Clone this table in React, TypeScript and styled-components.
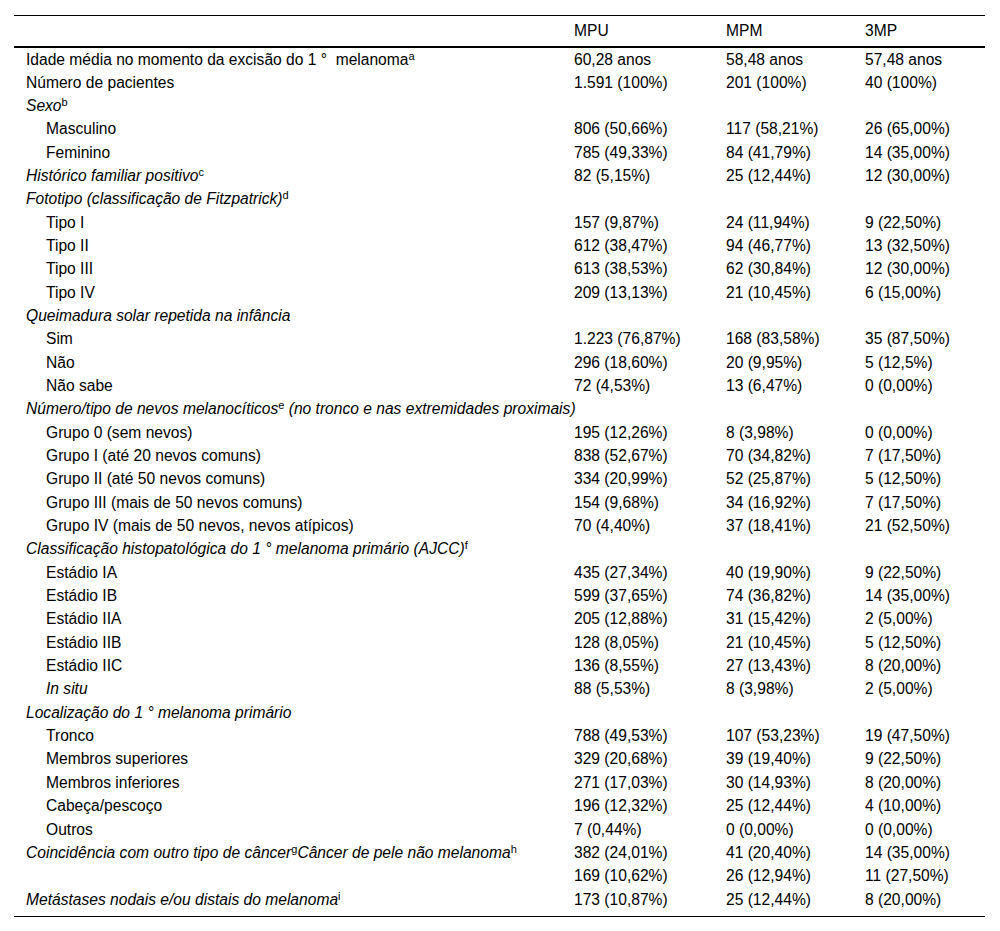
import React from "react";
import styled, { createGlobalStyle } from "styled-components";

const Global = createGlobalStyle`
  html, body { margin: 0; padding: 0; background: #fff; }
  body { font-family: "Liberation Sans", Arial, Helvetica, sans-serif; color: #000; }
`;

const Page = styled.div`
  padding: 15px 15px 16px 14px;
`;

const Frame = styled.div`
  width: 971px;
  border-top: 1px solid #000;
  border-bottom: 1px solid #000;
  padding-bottom: 5px;
`;

const Table = styled.table`
  width: 100%;
  border-collapse: collapse;
  table-layout: fixed;
  font-size: 15.6px;
`;

const HeadRow = styled.tr`
  height: 31px;
  border-bottom: 2px solid #000;
`;

const HeadCell = styled.th`
  font-weight: normal;
  text-align: left;
  padding: 0 0 0 12px;
  vertical-align: middle;
`;

const Row = styled.tr`
  height: 23.35px;
`;

const LabelCell = styled.td<{ $indent?: boolean; $italic?: boolean }>`
  padding: 0 0 0 ${(p) => (p.$indent ? 32 : 12)}px;
  font-style: ${(p) => (p.$italic ? "italic" : "normal")};
  white-space: nowrap;
  vertical-align: middle;
  line-height: 17px;
`;

const ValueCell = styled.td`
  padding: 0 0 0 12px;
  white-space: nowrap;
  vertical-align: middle;
  line-height: 17px;
`;

const Sup = styled.sup`
  font-size: 11px;
  font-style: normal;
  line-height: 0;
  vertical-align: 5px;
`;

type R = {
  label: React.ReactNode;
  v?: [string, string, string];
  indent?: boolean;
  italic?: boolean;
};

const deg = "1 °\u00a0";

const rows: R[] = [
  { label: <>Idade média no momento da excisão do {deg} melanoma<Sup>a</Sup></>, v: ["60,28 anos", "58,48 anos", "57,48 anos"] },
  { label: "Número de pacientes", v: ["1.591 (100%)", "201 (100%)", "40 (100%)"] },
  { label: <>Sexo<Sup>b</Sup></>, italic: true },
  { label: "Masculino", indent: true, v: ["806 (50,66%)", "117 (58,21%)", "26 (65,00%)"] },
  { label: "Feminino", indent: true, v: ["785 (49,33%)", "84 (41,79%)", "14 (35,00%)"] },
  { label: <>Histórico familiar positivo<Sup>c</Sup></>, italic: true, v: ["82 (5,15%)", "25 (12,44%)", "12 (30,00%)"] },
  { label: <>Fototipo (classificação de Fitzpatrick)<Sup>d</Sup></>, italic: true },
  { label: "Tipo I", indent: true, v: ["157 (9,87%)", "24 (11,94%)", "9 (22,50%)"] },
  { label: "Tipo II", indent: true, v: ["612 (38,47%)", "94 (46,77%)", "13 (32,50%)"] },
  { label: "Tipo III", indent: true, v: ["613 (38,53%)", "62 (30,84%)", "12 (30,00%)"] },
  { label: "Tipo IV", indent: true, v: ["209 (13,13%)", "21 (10,45%)", "6 (15,00%)"] },
  { label: "Queimadura solar repetida na infância", italic: true },
  { label: "Sim", indent: true, v: ["1.223 (76,87%)", "168 (83,58%)", "35 (87,50%)"] },
  { label: "Não", indent: true, v: ["296 (18,60%)", "20 (9,95%)", "5 (12,5%)"] },
  { label: "Não sabe", indent: true, v: ["72 (4,53%)", "13 (6,47%)", "0 (0,00%)"] },
  { label: <>Número/tipo de nevos melanocíticos<Sup>e</Sup> (no tronco e nas extremidades proximais)</>, italic: true },
  { label: "Grupo 0 (sem nevos)", indent: true, v: ["195 (12,26%)", "8 (3,98%)", "0 (0,00%)"] },
  { label: "Grupo I (até 20 nevos comuns)", indent: true, v: ["838 (52,67%)", "70 (34,82%)", "7 (17,50%)"] },
  { label: "Grupo II (até 50 nevos comuns)", indent: true, v: ["334 (20,99%)", "52 (25,87%)", "5 (12,50%)"] },
  { label: "Grupo III (mais de 50 nevos comuns)", indent: true, v: ["154 (9,68%)", "34 (16,92%)", "7 (17,50%)"] },
  { label: "Grupo IV (mais de 50 nevos, nevos atípicos)", indent: true, v: ["70 (4,40%)", "37 (18,41%)", "21 (52,50%)"] },
  { label: <>Classificação histopatológica do {deg}melanoma primário (AJCC)<Sup>f</Sup></>, italic: true },
  { label: "Estádio IA", indent: true, v: ["435 (27,34%)", "40 (19,90%)", "9 (22,50%)"] },
  { label: "Estádio IB", indent: true, v: ["599 (37,65%)", "74 (36,82%)", "14 (35,00%)"] },
  { label: "Estádio IIA", indent: true, v: ["205 (12,88%)", "31 (15,42%)", "2 (5,00%)"] },
  { label: "Estádio IIB", indent: true, v: ["128 (8,05%)", "21 (10,45%)", "5 (12,50%)"] },
  { label: "Estádio IIC", indent: true, v: ["136 (8,55%)", "27 (13,43%)", "8 (20,00%)"] },
  { label: "In situ", indent: true, italic: true, v: ["88 (5,53%)", "8 (3,98%)", "2 (5,00%)"] },
  { label: <>Localização do {deg}melanoma primário</>, italic: true },
  { label: "Tronco", indent: true, v: ["788 (49,53%)", "107 (53,23%)", "19 (47,50%)"] },
  { label: "Membros superiores", indent: true, v: ["329 (20,68%)", "39 (19,40%)", "9 (22,50%)"] },
  { label: "Membros inferiores", indent: true, v: ["271 (17,03%)", "30 (14,93%)", "8 (20,00%)"] },
  { label: "Cabeça/pescoço", indent: true, v: ["196 (12,32%)", "25 (12,44%)", "4 (10,00%)"] },
  { label: "Outros", indent: true, v: ["7 (0,44%)", "0 (0,00%)", "0 (0,00%)"] },
  { label: <>Coincidência com outro tipo de câncer<Sup>g</Sup>Câncer de pele não melanoma<Sup>h</Sup></>, italic: true, v: ["382 (24,01%)", "41 (20,40%)", "14 (35,00%)"] },
  { label: "", v: ["169 (10,62%)", "26 (12,94%)", "11 (27,50%)"] },
  { label: <>Metástases nodais e/ou distais do melanoma<Sup>i</Sup></>, italic: true, v: ["173 (10,87%)", "25 (12,44%)", "8 (20,00%)"] },
];

export default function App() {
  return (
    <Page>
      <Global />
      <Frame>
        <Table>
          <colgroup>
            <col style={{ width: 548 }} />
            <col style={{ width: 152 }} />
            <col style={{ width: 139 }} />
            <col style={{ width: 132 }} />
          </colgroup>
          <thead>
            <HeadRow>
              <HeadCell />
              <HeadCell>MPU</HeadCell>
              <HeadCell>MPM</HeadCell>
              <HeadCell>3MP</HeadCell>
            </HeadRow>
          </thead>
          <tbody>
            {rows.map((r, i) => (
              <Row key={i}>
                <LabelCell $indent={r.indent} $italic={r.italic}>{r.label}</LabelCell>
                <ValueCell>{r.v?.[0]}</ValueCell>
                <ValueCell>{r.v?.[1]}</ValueCell>
                <ValueCell>{r.v?.[2]}</ValueCell>
              </Row>
            ))}
          </tbody>
        </Table>
      </Frame>
    </Page>
  );
}
